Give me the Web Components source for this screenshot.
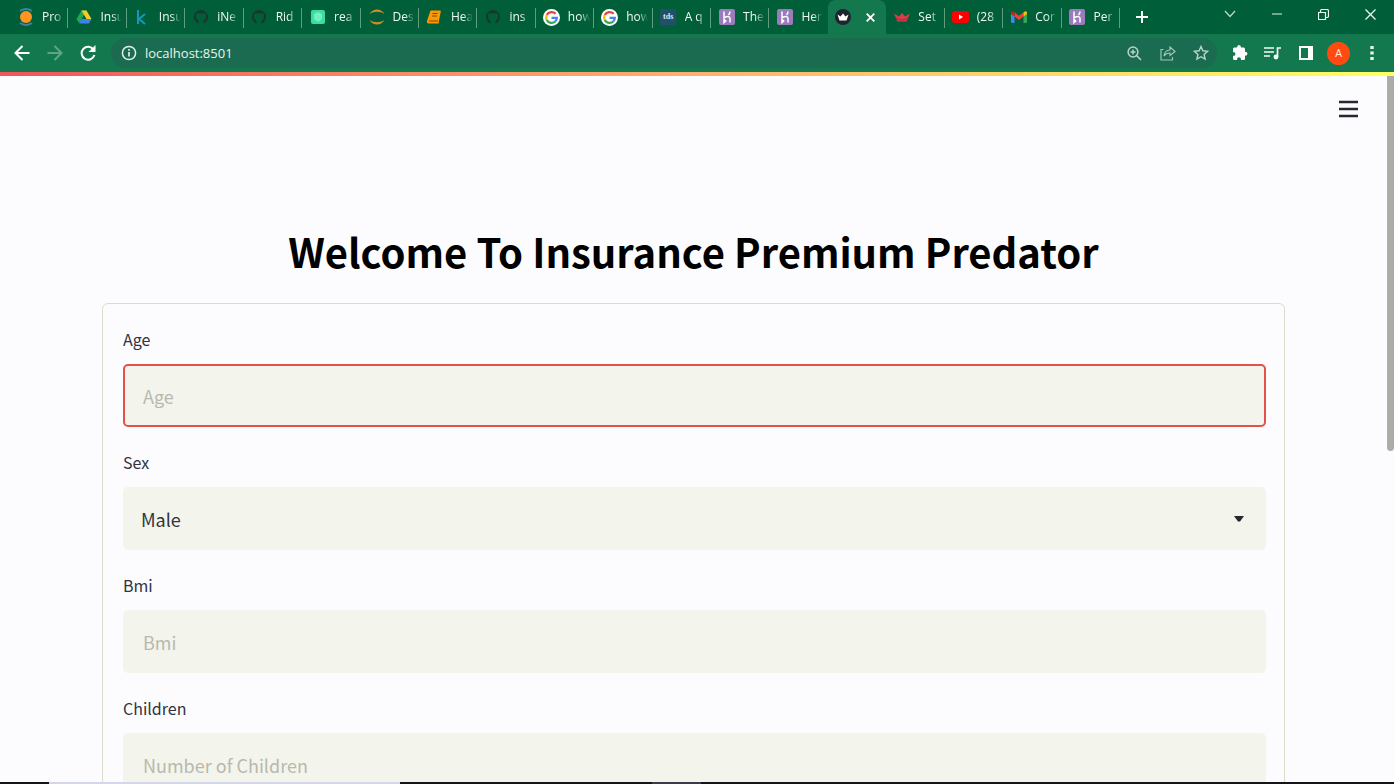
<!DOCTYPE html>
<html lang="en">
<head>
<meta charset="utf-8">
<title>Insurance Premium</title>
<style>
html, body { margin: 0; height: 100%; overflow: hidden; }
body { background: #fcfcff; color: #31333f; font-family: "Noto Sans CJK SC", "Noto Sans", sans-serif; }
</style>
</head>
<body>
<app-window></app-window>

<template id="t-window">
<style>
:host { display: flex; flex-direction: column; height: 100vh; overflow: hidden; }
header { flex: none; }
.strip { display: flex; align-items: stretch; height: 34px; background: #005f38; padding-left: 10px; }
.strip .fill { flex: 1; }
.tabs { display: flex; flex: 0 1 1110px; min-width: 0; }
.new { width: 44px; display: grid; place-items: center; }
button { border: 0; background: none; padding: 0; margin: 0; color: #fff; font: inherit; }
svg { display: block; }
.tds { display: block; width: 16px; height: 16px; background: #22506b; color: #dfe8ec; font: bold 8px/15px "Liberation Serif", serif; text-align: center; }
.wc { display: flex; align-items: center; height: 28px; }
.wc button { width: 47px; display: grid; place-items: center; }
.hair { flex: none; height: 4px; background: linear-gradient(90deg, #f0555a, #ffb070 50%, #ffff60); }
app-page { flex: 1; min-height: 0; }
footer { flex: none; height: 2px; display: flex; background: #14141a; }
footer i { display: block; }
footer i:nth-child(1) { width: 49px; }
footer i:nth-child(2) { width: 351px; background: #d4d6ea; }
footer i:nth-child(3) { width: 252px; }
footer i:nth-child(4) { width: 49px; background: #3c3c48; }
</style>
<header>
<div class="strip">
<div class="tabs">
<browser-tab label="Pro"><svg width="18" height="18" viewBox="0 0 18 18"><circle cx="9" cy="9" r="6" fill="#ff9420"/><path d="M3 3Q9-1 15 3M3 15q6 4 12 0" fill="none" stroke="#3d82a5" stroke-width="2"/></svg></browser-tab>
<browser-tab label="Insu"><svg width="16" height="16" viewBox="0 0 16 16"><path d="M5.500 1.500h5L8 6 3 14 .5 10z" fill="#20a756"/><path d="M5.500 1.500h5L15.500 10h-5z" fill="#fbc926"/><path d="M5.300 10h10.200L13 14.500H3z" fill="#3f82ee"/></svg></browser-tab>
<browser-tab label="Insu"><svg width="16" height="18" viewBox="0 0 16 18"><path d="M4 2v14M11 6l-6 5 6 5" fill="none" stroke="#1599b8" stroke-width="2"/></svg></browser-tab>
<browser-tab label="iNe" icon="hub"></browser-tab>
<browser-tab label="Rid" icon="hub"></browser-tab>
<browser-tab label="rea"><svg width="14" height="14" viewBox="0 0 14 14"><rect width="14" height="14" rx="2" fill="#3bdda0"/><path d="M3 4l4-2 4 2v5l-4 3-4-3z" fill="#73efc4"/></svg></browser-tab>
<browser-tab label="Des"><svg width="18" height="18" viewBox="0 0 18 18"><path d="M1.500 6C5 0 13 0 16.500 6 12 3 6 3 1.500 6zM1.500 12c3.500 6 11.500 6 15 0-4.500 3-10.500 3-15 0z" fill="#d98a26"/></svg></browser-tab>
<browser-tab label="Hea"><svg width="16" height="16" viewBox="0 0 16 16"><path d="M4.500 1.500h9.500q1 0 .8 1L13 11.500l-.3 3H3Q.5 14.500 1 12z" fill="#ff9800"/><path d="M6.500 4.500h5M6 7h5M3 12h9" fill="none" stroke="#70500c" stroke-width="1.200"/></svg></browser-tab>
<browser-tab label="ins" icon="hub"></browser-tab>
<browser-tab label="how" icon="goo"></browser-tab>
<browser-tab label="how" icon="goo"></browser-tab>
<browser-tab label="A q"><span class="tds">tds</span></browser-tab>
<browser-tab label="The" icon="her"></browser-tab>
<browser-tab label="Her" icon="her" last></browser-tab>
<browser-tab active><svg width="16" height="16" viewBox="0 0 16 16"><circle cx="8" cy="8" r="8" fill="#1d2530"/><path d="M2.500 5.500l3 2L8 4.500l2.500 3 3-2-2 6h-7z" fill="#fff"/></svg></browser-tab>
<browser-tab label="Set"><svg width="16" height="16" viewBox="0 0 16 16"><path d="M0 4.500l5 3L8 4l3 3.500 5-3-3.500 8h-9z" fill="#d93d49"/><path d="M2 9q6 4 12 0" stroke="#a52b3a" fill="none"/></svg></browser-tab>
<browser-tab label="(28"><svg width="17" height="14" viewBox="0 0 17 14"><rect y="1" width="17" height="12" rx="3" fill="#f00"/><path d="M7 4.500v5l4-2.500z" fill="#fff"/></svg></browser-tab>
<browser-tab label="Cor"><svg width="16" height="14" viewBox="0 0 16 14"><path d="M0 3l3.500 2.500V13H1.300Q0 13 0 11.800z" fill="#4285f4"/><path d="M16 3l-3.500 2.500V13h2.200q1.300 0 1.300-1.200z" fill="#34a853"/><path d="M3.500 2.300L8 5.800l4.500-3.500V6.500L8 10 3.500 6.500z" fill="#ea4335"/><path d="M0 3Q0 0 3.500 2.300V6.500L0 4z" fill="#c5221f"/><path d="M16 3q0-3-3.500-.7V6.500L16 4z" fill="#fbbc04"/></svg></browser-tab>
<browser-tab label="Per" icon="her"></browser-tab>
</div>
<button class="new" aria-label="New tab"><svg width="12" height="12" viewBox="0 0 12 12"><path d="M6 0v12M0 6h12" stroke="#fff" stroke-width="2"/></svg></button>
<span class="fill"></span>
<div class="wc">
<button aria-label="Search tabs"><svg width="12" height="8" viewBox="0 0 12 8"><path d="M1 1l5 5.500L11 1" fill="none" stroke="#b9d8c6" stroke-width="1.300"/></svg></button>
<button aria-label="Minimize"><svg width="10" height="10" viewBox="0 0 10 10"><path d="M0 5h10" stroke="#e4f1e9"/></svg></button>
<button aria-label="Restore"><svg width="11" height="11" viewBox="0 0 11 11"><path d="M.5 3.500h7v7h-7zM2.500 3V2q0-1.500 1.500-1.500h5q1.500 0 1.500 1.500v5Q10.500 8.500 9 8.500H8" fill="none" stroke="#f0f8f3" stroke-width="1.200"/></svg></button>
<button aria-label="Close"><svg width="11" height="11" viewBox="0 0 11 11"><path d="M.5.5l10 10m0-10l-10 10" stroke="#f0f8f3" stroke-width="1.300"/></svg></button>
</div>
</div>
<browser-bar></browser-bar>
</header>
<div class="hair"></div>
<app-page></app-page>
<footer><i></i><i></i><i></i><i></i></footer>
</template>

<template id="t-tab">
<style>
:host { display: block; flex: 1 1 0; min-width: 0; position: relative; font: 12px/18px "Open Sans", "Noto Sans", sans-serif; color: #f2faf5; }
button { width: 100%; height: 34px; border: 0; background: none; color: inherit; font: inherit; padding: 0 0 0 7px; display: flex; align-items: center; gap: 8px; text-align: left; }
.ico { flex: none; width: 17px; display: grid; place-items: center; }
.txt { flex: none; white-space: nowrap; -webkit-mask-image: linear-gradient(90deg, #000 12px, transparent 22px); mask-image: linear-gradient(90deg, #000 12px, transparent 22px); }
:host::after { content: ""; position: absolute; right: 0; top: 8px; width: 1px; height: 20px; background: #5f9d7c; }
:host([last])::after, :host([active])::after { display: none; }
:host([active]) button { background: #14784f; border-radius: 8px 8px 0 0; gap: 14px; }
</style>
<button><span class="ico"><slot></slot></span><span class="txt"></span></button>
</template>

<template id="t-bar">
<style>
:host { display: flex; align-items: center; height: 38px; background: #14784f; padding: 0 6px 0 9px; }
button { border: 0; background: none; padding: 0; width: 33px; height: 30px; display: grid; place-items: center; flex: none; }
svg { display: block; }
.nav { display: flex; width: 102px; flex: none; }
.nav button { width: 26px; }
.nav button:nth-child(2) { width: 40px; }
.omni { flex: 1; display: flex; align-items: center; height: 30px; border-radius: 15px; background: #1b6b50; min-width: 0; padding-left: 9px; margin-right: 6px; }
.omni button:first-child { width: 18px; }
input { flex: 1; min-width: 0; border: 0; outline: 0; background: none; color: #e9f6ee; font: 13px/20px "Open Sans", "Noto Sans", sans-serif; padding: 0 0 0 7px; }
.av i { display: block; width: 23px; height: 23px; border-radius: 50%; background: #ff4b12; color: #ffe9dd; font: 11px/23px "Roboto", sans-serif; text-align: center; }
</style>
<div class="nav">
<button aria-label="Back"><svg width="16" height="16" viewBox="0 0 16 16"><path d="M15.500 8H2m6.500-7L1.500 8l7 7" fill="none" stroke="#fff" stroke-width="2"/></svg></button>
<button aria-label="Forward"><svg width="16" height="16" viewBox="0 0 16 16"><path d="M.5 8H14M7.500 1l7 7-7 7" fill="none" stroke="#5fa583" stroke-width="2"/></svg></button>
<button aria-label="Reload"><svg width="16" height="16" viewBox="0 0 16 16"><path d="M13.500 4.500A6.500 6.500 0 1 0 14.400 10" fill="none" stroke="#fff" stroke-width="2"/><path d="M15.500 0v7h-7z" fill="#fff"/></svg></button>
</div>
<div class="omni">
<button aria-label="Site information"><svg width="16" height="16" viewBox="0 0 16 16"><circle cx="8" cy="8" r="6.600" fill="none" stroke="#e2f0e8" stroke-width="1.500"/><path d="M8 7v4.500M8 4v1.700" stroke="#e2f0e8" stroke-width="1.700"/></svg></button>
<input aria-label="Address" value="localhost:8501">
<button aria-label="Zoom"><svg width="15" height="15" viewBox="0 0 15 15"><path d="M9.500 9.500L14 14M6 3.500v5M3.500 6h5" stroke="#b7d5c7" stroke-width="1.500"/><circle cx="6" cy="6" r="4.900" fill="none" stroke="#b7d5c7" stroke-width="1.500"/></svg></button>
<button aria-label="Share"><svg width="16" height="15" viewBox="0 0 16 15"><path d="M3.500 3.500H1v10.500h11.500V11M4 10q.5-5.500 6-6V1l5 4.500-5 4V7Q6 7 4 10z" fill="none" stroke="#9ec7b3" stroke-width="1.200"/></svg></button>
<button aria-label="Bookmark"><svg width="16" height="16" viewBox="0 0 16 16"><path d="M8 1.500l1.900 4.300 4.700.5-3.500 3.200 1 4.600L8 11.700l-4.100 2.400 1-4.600L1.400 6.300l4.700-.5z" fill="none" stroke="#b7d5c7" stroke-width="1.400"/></svg></button>
</div>
<button aria-label="Extensions"><svg width="16" height="16" viewBox="0 0 16 16"><path d="M1 4q0-1.500 1.500-1.500H5Q5 0 7 0t2 2.500h2.500Q13 2.500 13 4v2.700q2.500 0 2.500 2T13 10.800v3Q13 15 11.500 15H9q0-2.800-2-2.800T5 15H2.500Q1 15 1 13.500V11q2.500 0 2.500-2T1 7z" fill="#fff"/></svg></button>
<button aria-label="Media"><svg width="17" height="14" viewBox="0 0 17 14"><path d="M0 2h10M0 6h10M0 10h6M13.500 11V2H17" fill="none" stroke="#f4fbf7" stroke-width="1.700"/><circle cx="12" cy="11" r="2.400" fill="#f4fbf7"/></svg></button>
<button aria-label="Side panel"><svg width="14" height="14" viewBox="0 0 14 14"><path d="M1 1h12v12H1z" fill="none" stroke="#fff" stroke-width="2"/><path d="M9 0h5v14H9z" fill="#fff"/></svg></button>
<button class="av" aria-label="Profile"><i>A</i></button>
<button aria-label="Menu"><svg width="4" height="14" viewBox="0 0 4 14"><path d="M.3 0h3.400v3H.3zM.3 5.500h3.400v3H.3zM.3 11h3.400v3H.3z" fill="#e8f6ee"/></svg></button>
</template>

<template id="t-page">
<style>
:host { display: flex; background: #fcfcff; overflow: hidden; }
main { flex: 1; min-width: 0; padding: 0 102px; }
.rail { flex: none; width: 7px; }
.rail i { display: block; height: 375px; background: #adada8; border-radius: 0 0 4px 4px; }
nav { display: flex; justify-content: flex-end; margin-right: -75px; padding-top: 22px; }
nav button { border: 0; background: none; padding: 2px; display: block; }
nav svg { display: block; }
h1 { margin: 99px 0 0; text-align: center; color: #000; font-size: 40px; line-height: 64px; font-weight: 700; white-space: nowrap; }
form { margin-top: 20px; border: 1px solid #d9dccb; border-radius: 6px; padding: 20px 18px 20px 20px; display: grid; gap: 20px; }
</style>
<main>
<nav><button aria-label="Main menu"><svg width="19" height="18" viewBox="0 0 19 18"><path d="M0 2h19M0 9h19M0 16h19" stroke="#262730" stroke-width="2.400"/></svg></button></nav>
<h1>Welcome To Insurance Premium Predator</h1>
<form>
<form-field label="Age" hint="Age" focused></form-field>
<form-field label="Sex" choice="Male"></form-field>
<form-field label="Bmi" hint="Bmi"></form-field>
<form-field label="Children" hint="Number of Children"></form-field>
</form>
</main>
<div class="rail"><i></i></div>
</template>

<template id="t-field">
<style>
:host { display: block; color: #31333f; }
label { display: block; font-size: 16px; line-height: 30px; padding-bottom: 10px; }
.box { position: relative; display: block; }
input, select { display: block; box-sizing: border-box; width: 100%; height: 63px; margin: 0; border: 2px solid #f3f4ec; border-radius: 5px; background: #f3f4ec; padding: 0 18px; color: #31333f; font: inherit; font-size: 18px; outline: 0; appearance: none; -webkit-appearance: none; }
select { padding: 0 16px; }
input::placeholder { color: #b8b9ac; opacity: 1; }
:host([focused]) input { border-color: #e2514a; }
svg { position: absolute; right: 22px; top: 29px; pointer-events: none; }
</style>
<label for="c"></label><span class="box"></span>
</template>

<script>
const stamp = (el, id) => {
  const root = el.attachShadow({ mode: "open" });
  root.append(document.getElementById(id).content.cloneNode(true));
  return root;
};
const icons = {
  hub: '<svg width="16" height="16" viewBox="0 0 16 16"><path d="M5.500 14.500A7 7 0 1 1 10.500 14.500V11.500Q13.500 10.500 13 6.500L12 4Q8 5 4 4L3 6.500Q2.500 10.500 5.500 11.500z" fill="#17372f"/><path d="M6 15v-3Q3.500 11 4 7.500L4.500 5l2 .8h3l2-.8.5 2.500Q12.500 11 10 12v3z" fill="#005f38"/></svg>',
  goo: '<svg width="17" height="17" viewBox="0 0 17 17"><circle cx="8.500" cy="8.500" r="8.500" fill="#fff"/><g fill="none" stroke-width="2.300"><path d="M12.600 4.800A5.400 5.400 0 0 0 3.800 6" stroke="#ea4335"/><path d="M3.800 6a5.400 5.400 0 0 0 0 5" stroke="#fbbc05"/><path d="M3.800 11a5.400 5.400 0 0 0 8.500 1.500" stroke="#34a853"/><path d="M12.300 12.500q1.500-1.500 1.500-3.700H8.500" stroke="#4285f4"/></g></svg>',
  her: '<svg width="16" height="16" viewBox="0 0 16 16"><rect width="16" height="16" rx="2" fill="#9a7bbb"/><path d="M5 2.500v6.200q6-2.500 6 .8v4M11 2.500Q11 4.500 9.500 6M5 10.500v3l1.700-1.500z" fill="none" stroke="#fff" stroke-width="1.500"/></svg>'
};
customElements.define("browser-tab", class extends HTMLElement {
  connectedCallback() {
    if (this.shadowRoot) return;
    const root = stamp(this, "t-tab");
    const icon = icons[this.getAttribute("icon")];
    if (icon) root.querySelector(".ico").innerHTML = icon;
    const text = root.querySelector(".txt");
    if (this.hasAttribute("active")) {
      text.outerHTML = '<svg width="9" height="9" viewBox="0 0 9 9"><path d="M.7.7l7.600 7.600m0-7.600L.7 8.300" stroke="#fff" stroke-width="1.800"/></svg>';
      root.querySelector("button").setAttribute("aria-label", "Current tab");
    } else text.textContent = this.getAttribute("label");
  }
});
customElements.define("browser-bar", class extends HTMLElement {
  connectedCallback() { if (!this.shadowRoot) stamp(this, "t-bar"); }
});
customElements.define("form-field", class extends HTMLElement {
  connectedCallback() {
    if (this.shadowRoot) return;
    const root = stamp(this, "t-field");
    root.querySelector("label").textContent = this.getAttribute("label");
    const choice = this.getAttribute("choice");
    const control = document.createElement(choice ? "select" : "input");
    control.id = "c";
    const box = root.querySelector(".box");
    box.append(control);
    if (choice) {
      control.add(new Option(choice));
      box.insertAdjacentHTML("beforeend", '<svg width="10" height="6" viewBox="0 0 10 6"><path d="M0 0h10L6 5.500H4z" fill="#262730"/></svg>');
    } else control.placeholder = this.getAttribute("hint");
  }
});
customElements.define("app-page", class extends HTMLElement {
  connectedCallback() { if (!this.shadowRoot) stamp(this, "t-page"); }
});
customElements.define("app-window", class extends HTMLElement {
  connectedCallback() { if (!this.shadowRoot) stamp(this, "t-window"); }
});
</script>
</body>
</html>
